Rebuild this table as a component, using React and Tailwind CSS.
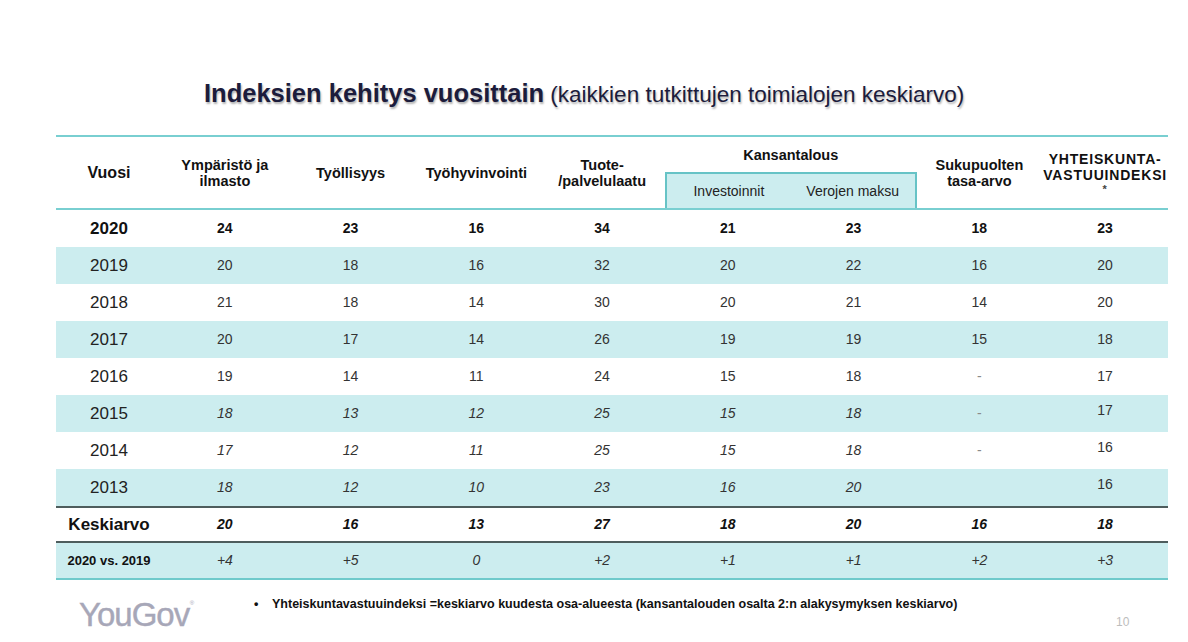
import React from "react";

const COLS = "grid grid-cols-[106px_repeat(8,minmax(0,1fr))]";

const rows = [
  { y: "2020", v: ["24", "23", "16", "34", "21", "23", "18", "23"], bold: true },
  { y: "2019", v: ["20", "18", "16", "32", "20", "22", "16", "20"] },
  { y: "2018", v: ["21", "18", "14", "30", "20", "21", "14", "20"] },
  { y: "2017", v: ["20", "17", "14", "26", "19", "19", "15", "18"] },
  { y: "2016", v: ["19", "14", "11", "24", "15", "18", "-", "17"] },
  { y: "2015", v: ["18", "13", "12", "25", "15", "18", "-", "17"], it: true },
  { y: "2014", v: ["17", "12", "11", "25", "15", "18", "-", "16"], it: true },
  { y: "2013", v: ["18", "12", "10", "23", "16", "20", "", "16"], it: true },
];

function Cell({ val, bold, it, raised }) {
  if (val === "-") {
    return <div className="text-center text-[14px] text-[#8a8a8a]">-</div>;
  }
  if (raised) {
    return (
      <div className="self-start pt-[5px] text-center text-[14px] text-[#333]">{val}</div>
    );
  }
  return (
    <div
      className={
        bold
          ? "text-center text-[14px] font-bold text-[#111]"
          : it
          ? "text-center text-[14px] italic text-[#333]"
          : "text-center text-[14px] text-[#333]"
      }
    >
      {val}
    </div>
  );
}

export default function App() {
  return (
    <div className="w-[1188px] h-[642px] bg-white font-['Liberation_Sans',Arial,sans-serif] overflow-hidden">
      <div className="pt-[78px] pl-[204px] h-[135px] whitespace-nowrap text-[#1c1c3c] leading-[30px] [text-shadow:1px_2px_2px_rgba(0,0,0,0.3)]">
        <span className="text-[25.5px] font-bold">Indeksien kehitys vuosittain</span>
        <span className="text-[22.5px]"> (kaikkien tutkittujen toimialojen keskiarvo)</span>
      </div>

      <div className="ml-[56px] w-[1112px]">
        {/* header */}
        <div className={`${COLS} h-[75px] border-t-2 border-b-2 border-[#79cfd1] text-[#111] font-bold text-[14.5px] leading-[16px]`}>
          <div className="flex items-center justify-center text-[16px]">Vuosi</div>
          <div className="flex items-center justify-center text-center">Ympäristö ja<br />ilmasto</div>
          <div className="flex items-center justify-center">Työllisyys</div>
          <div className="flex items-center justify-center">Työhyvinvointi</div>
          <div className="flex items-center justify-center text-center">Tuote-<br />/palvelulaatu</div>
          <div className="col-span-2 flex flex-col">
            <div className="h-[35px] flex items-center justify-center text-[14.5px]">Kansantalous</div>
            <div className="flex-1 grid grid-cols-2 items-center bg-[#ccedef] border-t-2 border-x-2 border-[#66c3c6] font-normal text-[14px] text-[#222]">
              <div className="text-center">Investoinnit</div>
              <div className="text-center">Verojen maksu</div>
            </div>
          </div>
          <div className="flex items-center justify-center text-center">Sukupuolten<br />tasa-arvo</div>
          <div className="flex flex-col items-center justify-center text-center text-[14px] tracking-[0.8px] pt-[2px]">
            <div>YHTEISKUNTA-</div>
            <div>VASTUUINDEKSI</div>
            <div className="text-[11px] leading-[13px] text-[#444]">*</div>
          </div>
        </div>

        {/* body */}
        {rows.map((r, i) => (
          <div
            key={r.y}
            className={`${COLS} h-[37px] items-center ${i % 2 === 1 ? "bg-[#ccedef]" : ""}`}
          >
            <div className={r.bold ? "text-center text-[17px] font-bold text-[#111]" : "text-center text-[17px] text-[#222]"}>
              {r.y}
            </div>
            {r.v.map((v, j) => (
              <Cell
                key={j}
                val={v}
                bold={r.bold}
                it={r.it && j < 7}
                raised={r.it && j === 7}
              />
            ))}
          </div>
        ))}

        <div className={`${COLS} h-[37px] items-center border-t-2 border-b-2 border-[#4e5d5d]`}>
          <div className="text-center text-[17px] font-bold text-[#111]">Keskiarvo</div>
          {["20", "16", "13", "27", "18", "20", "16", "18"].map((v, j) => (
            <div key={j} className="text-center text-[14px] font-bold italic text-[#111]">{v}</div>
          ))}
        </div>

        <div className={`${COLS} h-[37px] items-center bg-[#ccedef] border-b-2 border-[#6fcacb]`}>
          <div className="text-center text-[13px] font-bold text-[#111]">2020 vs. 2019</div>
          {["+4", "+5", "0", "+2", "+1", "+1", "+2", "+3"].map((v, j) => (
            <div key={j} className="text-center text-[14px] italic text-[#333]">{v}</div>
          ))}
        </div>
      </div>

      {/* footer */}
      <div className="flex items-start pt-[16px]">
        <div className="w-[254px] pl-[79px] pt-[2px]">
          <div className="relative inline-block text-[33px] leading-[34px] tracking-[-1px] text-[#a7a7b8] [-webkit-text-stroke:0.4px_#a7a7b8]">
            YouGov
            <span className="absolute -right-[5px] top-[2px] text-[6px] leading-[6px] tracking-normal [-webkit-text-stroke:0]">®</span>
          </div>
        </div>
        <div className="flex-1 text-[12.5px] leading-[16px] font-bold text-[#111] whitespace-nowrap">
          <span className="inline-block w-[18px]">•</span>
          Yhteiskuntavastuuindeksi =keskiarvo kuudesta osa-alueesta (kansantalouden osalta 2:n alakysymyksen keskiarvo)
        </div>
        <div className="w-[72px] pt-[17px] text-[12px] text-[#bdbdbd]">10</div>
      </div>
    </div>
  );
}
